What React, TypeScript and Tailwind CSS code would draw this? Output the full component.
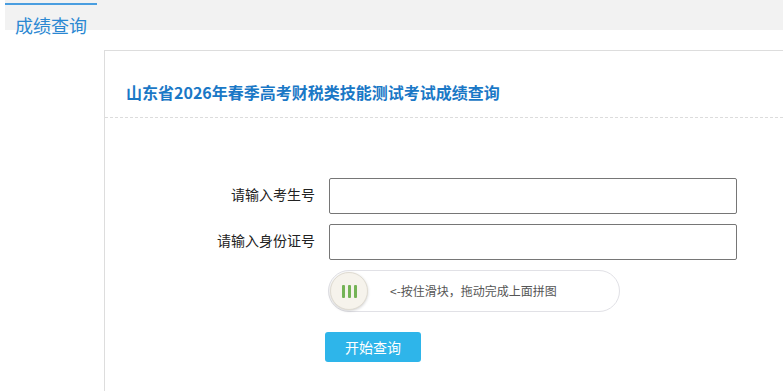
import React from "react";

const font = { fontFamily: '"Noto Sans CJK SC", "Noto Sans", sans-serif' };

function Field({ label }: { label: string }) {
  return (
    <div className="flex items-start mb-[10px]">
      <label className="w-[210px] shrink-0 pt-[7px] text-right text-[14px] leading-[18px] text-[#222]">
        {label}
      </label>
      <input
        type="text"
        className="ml-[14px] h-[36px] w-[408px] rounded-[2px] border border-[#767676] bg-white outline-none"
      />
    </div>
  );
}

export default function App() {
  return (
    <div className="relative h-[391px] w-[783px] overflow-hidden bg-white" style={font}>
      {/* top tab strip */}
      <div className="ml-[5px] h-[30px] bg-[#f2f2f2]">
        <div className="w-[92px] pt-[3px]">
          <div className="h-[2px] bg-[#4a9ee0]" />
          <div className="pt-[8px] text-center text-[18px] leading-[24px] text-[#2b88d2]">
            成绩查询
          </div>
        </div>
      </div>

      {/* card */}
      <div className="ml-[104px] mt-[20px] h-[400px] border-l border-t border-[#dddddd]">
        <div className="h-[67px] border-b border-dashed border-[#dcdcdc] pl-[21px] pt-[31px]">
          <h1 className="text-[16px] font-bold leading-[20px] text-[#1a78c6]">
            山东省2026年春季高考财税类技能测试考试成绩查询
          </h1>
        </div>

        <div className="pt-[60px]">
          <Field label="请输入考生号" />
          <Field label="请输入身份证号" />

          {/* slider captcha */}
          <div className="ml-[223px] flex h-[42px] w-[292px] items-center rounded-full border border-[#e1e1e6] bg-white pl-[1px]">
            <div className="flex h-[38px] w-[38px] items-center justify-center gap-[3px] rounded-full border border-[#e0dcd2] bg-[#f6f3ec] shadow-[0_1px_3px_rgba(0,0,0,0.18)]">
              <span className="h-[13px] w-[3px] rounded-[1px] bg-[#74b356]" />
              <span className="h-[13px] w-[3px] rounded-[1px] bg-[#74b356]" />
              <span className="h-[13px] w-[3px] rounded-[1px] bg-[#74b356]" />
            </div>
            <span className="ml-[22px] text-[12px] leading-[16px] text-[#555]">
              &lt;-按住滑块，拖动完成上面拼图
            </span>
          </div>

          <button className="ml-[220px] mt-[20px] h-[30px] w-[96px] rounded-[3px] bg-[#2eb5ea] text-[14px] text-white">
            开始查询
          </button>
        </div>
      </div>
    </div>
  );
}
